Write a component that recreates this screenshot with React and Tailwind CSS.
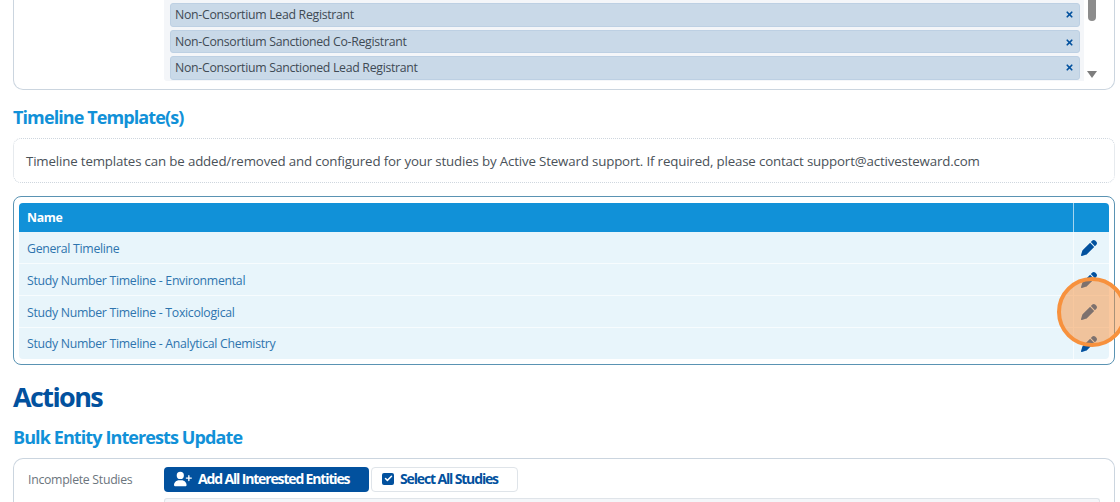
import React from 'react';
import { Check, X } from 'lucide-react';
import { FaUserPlus } from 'react-icons/fa6';

const tags = ['Non-Consortium Lead Registrant', 'Non-Consortium Sanctioned Co-Registrant', 'Non-Consortium Sanctioned Lead Registrant'];
const rows = ['General Timeline', 'Study Number Timeline - Environmental', 'Study Number Timeline - Toxicological', 'Study Number Timeline - Analytical Chemistry'];

function PencilIcon() {
  return (
    <svg viewBox="0 0 512 512" className="h-[16px] w-[16px] fill-[#02519e]">
      <path d="M362.7 19.3 314.3 67.7 444.3 197.7 492.7 149.3c25-25 25-65.5 0-90.5L453.3 19.3c-25-25-65.5-25-90.5 0zM291.7 90.3 58.6 323.5c-10.4 10.4-18 23.3-22.2 37.4L1 481.2c-2.5 8.5-.2 17.6 6 23.8s15.3 8.5 23.7 6.1l120.3-35.4c14.1-4.2 27-11.8 37.4-22.2L421.7 220.3 291.7 90.3z" />
    </svg>
  );
}

export default function App() {
  return (
    <div className="relative h-[502px] w-[1120px] overflow-hidden bg-white pl-[13px] pr-[5px] font-['Open_Sans',sans-serif] text-[12.3px] tracking-[-0.3px] text-[#495057]">
      <div className="h-[90px] rounded-b-[10px] border-x border-b border-[#cbd5df] pl-[150px] pr-[14px]">
        <div className="flex h-[81px] rounded-b-[3px] bg-[#f4f6f9] pl-[6px]">
          <div className="flex flex-1 flex-col gap-[3px] pt-[3px]">
            {tags.map((t) => (
              <div key={t} className="flex h-[23.5px] items-center justify-between rounded-[3px] border border-[#bdd0e3] bg-[#c9d9e8] pl-[4px] pr-[5px] text-[#3f4a54] even:pt-[2px]">
                <span>{t}</span>
                <X className="h-[9px] w-[9px] text-[#02519e]" strokeWidth={4.5} />
              </div>
            ))}
          </div>
          <div className="ml-[4px] flex h-[81px] w-[16px] flex-col items-center justify-between bg-white">
            <div className="h-[21px] w-[8px] rounded-b-[4px] bg-[#8c8c8c]" />
            <div className="mb-[3px] h-0 w-0 border-x-[5px] border-t-[7px] border-x-transparent border-t-[#7d7d7d]" />
          </div>
        </div>
      </div>

      <h2 className="mt-[15px] text-[18px] leading-[25px] font-bold tracking-[-0.9px] text-[#1191d8]">Timeline Template(s)</h2>

      <div className="mt-[8px] flex h-[45px] items-center rounded-[8px] border border-dotted border-[#ced6de] px-[12px] pt-[2px] text-[13.3px] tracking-[-0.16px] text-[#4a5259]">
        Timeline templates can be added/removed and configured for your studies by Active Steward support. If required, please contact support@activesteward.com
      </div>

      <div className="mt-[13px] rounded-[8px] border border-[#5a93b3] px-[5px] pt-[6px] pb-[5px]">
        <div className="overflow-hidden rounded-[4px]">
          <div className="flex h-[29px] bg-[#1191d8] font-bold text-white">
            <div className="flex flex-1 items-center px-[8px] pt-[2px]">Name</div>
            <div className="w-[36px] border-l border-[#a5d5ef]" />
          </div>
          {rows.map((r, i) => (
            <div key={r} className="flex h-[32px] border-b border-[#f7fcfe] bg-[#e8f5fb] text-[#2e74ae] last:h-[31px] last:border-b-0">
              <div className={i === rows.length - 1 ? 'flex flex-1 items-center px-[8px] pt-[1px]' : 'flex flex-1 items-center px-[8px] pt-[3px]'}>{r}</div>
              <div className="flex w-[36px] items-center justify-center border-l border-[#f7fcfe] pr-[6px]">
                <PencilIcon />
              </div>
            </div>
          ))}
        </div>
      </div>

      <h1 className="mt-[13px] text-[27px] leading-[37px] font-bold tracking-[-1.6px] text-[#02519e]">Actions</h1>
      <h2 className="mt-[10px] text-[18px] leading-[25px] font-bold tracking-[-0.9px] text-[#1191d8]">Bulk Entity Interests Update</h2>

      <div className="mt-[8px] flex h-[60px] rounded-t-[10px] border-x border-t border-[#cbd5df] pl-[14px] pr-[14px] pt-[8px]">
        <div className="w-[136px] pt-[4px] text-[#6c757d]">Incomplete Studies</div>
        <div className="flex-1">
          <div className="flex gap-[2px]">
            <div className="flex h-[25px] w-[205px] items-center gap-[6px] rounded-[4px] bg-[#02519e] pl-[10px] pb-[2px] text-[14px] font-bold tracking-[-1.15px] text-white">
              <FaUserPlus className="h-[16px] w-[18px]" />
              Add All Interested Entities
            </div>
            <div className="flex h-[25px] w-[147px] items-center gap-[6px] rounded-[4px] border border-[#dfe4e9] pl-[10px] pb-[2px] text-[14px] font-bold tracking-[-1.15px] text-[#02519e]">
              <span className="flex h-[12px] w-[12px] items-center justify-center rounded-[2px] bg-[#02519e]">
                <Check className="h-[9px] w-[9px] text-white" strokeWidth={4} />
              </span>
              Select All Studies
            </div>
          </div>
          <div className="mt-[6px] h-[10px] rounded-t-[3px] border-x border-t border-[#dfe4e9] bg-[#f4f6f9]" />
        </div>
      </div>

      <div className="absolute left-[1057px] top-[277px] h-[70px] w-[70px] rounded-full border-[4px] border-[#f7913d] bg-[#f7913d]/50" />
    </div>
  );
}
